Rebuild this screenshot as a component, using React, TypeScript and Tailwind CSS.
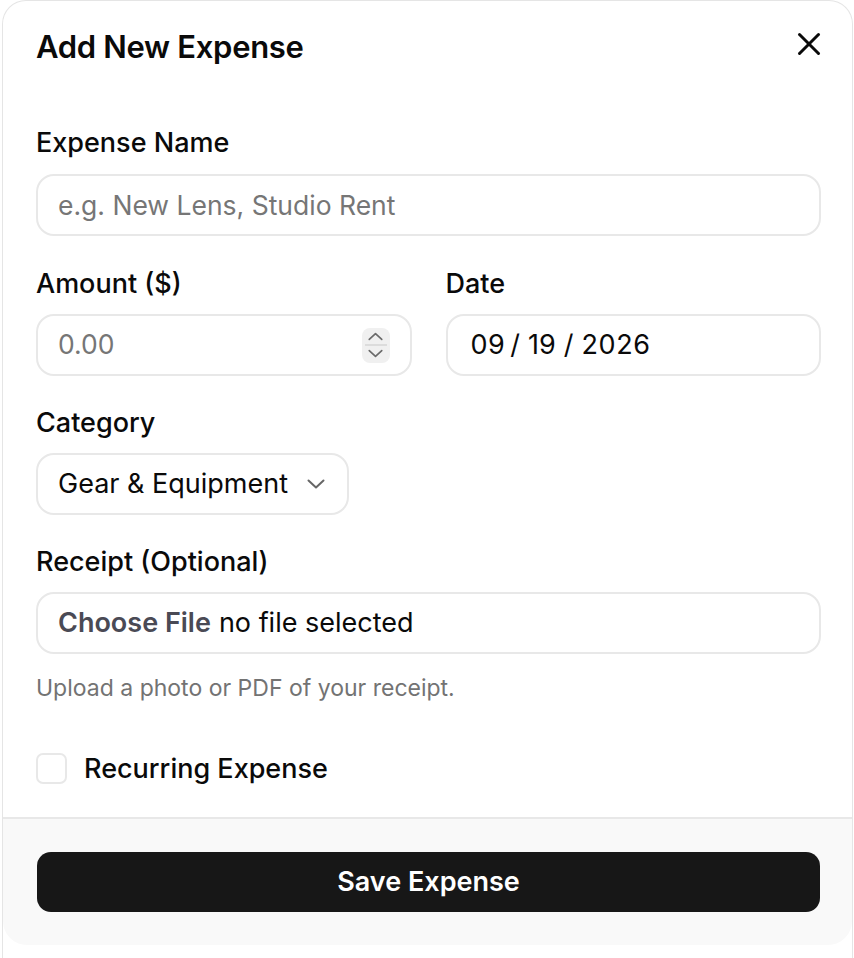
import { X } from "lucide-react"

function Chevron({ up = false, className = "" }: { up?: boolean; className?: string }) {
  return (
    <svg width="18" height="10" viewBox="0 0 18 10" className={className} fill="none">
      <path
        d={up ? "M1.5 8.5L9 1.5l7.5 7" : "M1.5 1.5L9 8.5l7.5-7"}
        stroke="currentColor"
        strokeWidth="2"
        strokeLinecap="round"
        strokeLinejoin="round"
      />
    </svg>
  )
}

export default function App() {
  return (
    <div className="h-[958px] bg-white font-['Inter',sans-serif] text-[#0a0a0a]">
      <div className="h-full ml-[2px] mr-[1px] flex flex-col border-x border-t border-[#e5e5e5] rounded-t-[24px]">
        {/* Header */}
        <div className="flex items-center justify-between pl-[33px] pr-[24px] pt-[24px]">
          <h1 className="text-[31px] leading-[38px] font-semibold tracking-[-0.01em]">Add New Expense</h1>
          <button aria-label="Close" className="mb-[6px]">
            <X className="h-[38px] w-[38px]" strokeWidth={1.9} />
          </button>
        </div>

        {/* Form */}
        <div className="flex-1 flex flex-col pl-[33px] pr-[31px] pt-[59px]">
          <div className="flex flex-col gap-[16px]">
            <label className="text-[27px] leading-[30px] font-medium">Expense Name</label>
            <input
              placeholder="e.g. New Lens, Studio Rent"
              className="h-[62px] w-full rounded-[18px] border-2 border-[#e8e8e8] px-[20px] text-[26.5px] placeholder:text-[#767676] outline-none"
            />
          </div>

          <div className="grid grid-cols-2 gap-[34px] mt-[33px]">
            <div className="flex flex-col gap-[15px]">
              <label className="text-[27px] leading-[30px] font-medium">Amount ($)</label>
              <div className="h-[62px] flex items-center rounded-[18px] border-2 border-[#e8e8e8] pl-[20px] pr-[20px]">
                <input
                  placeholder="0.00"
                  className="flex-1 min-w-0 text-[26.5px] placeholder:text-[#767676] outline-none"
                />
                <div className="flex flex-col items-center justify-center gap-[3px] w-[28px] h-[35px] rounded-[8px] bg-[#f0f0f0] text-[#6b6b6b]">
                  <Chevron up className="w-[15px] h-[9px]" />
                  <div className="w-[22px] h-[2px] bg-[#dcdcdc]" />
                  <Chevron className="w-[15px] h-[9px]" />
                </div>
              </div>
            </div>
            <div className="flex flex-col gap-[15px]">
              <label className="text-[27px] leading-[30px] font-medium">Date</label>
              <div className="h-[62px] flex items-center rounded-[18px] border-2 border-[#e8e8e8] px-[23px] text-[27px]">
                <span className="tracking-[0.02em]">09</span>
                <span className="ml-[5px]">/</span>
                <span className="ml-[8px]">19</span>
                <span className="ml-[8px]">/</span>
                <span className="ml-[8px] tracking-[0.02em]">2026</span>
              </div>
            </div>
          </div>

          <div className="flex flex-col gap-[15px] mt-[32px]">
            <label className="text-[27px] leading-[30px] font-medium">Category</label>
            <div className="h-[62px] w-[313px] flex items-center justify-between rounded-[18px] border-2 border-[#e8e8e8] pl-[20px] pr-[22px] text-[27px]">
              <span>Gear &amp; Equipment</span>
              <Chevron className="w-[18px] h-[10px] text-[#666666]" />
            </div>
          </div>

          <div className="flex flex-col gap-[15px] mt-[32px]">
            <label className="text-[27px] leading-[30px] font-medium">Receipt (Optional)</label>
            <div className="h-[62px] flex items-center gap-[8px] rounded-[18px] border-2 border-[#e8e8e8] px-[20px] text-[27px]">
              <span className="font-semibold text-[#4a4a55]">Choose File</span>
              <span>no file selected</span>
            </div>
            <p className="text-[23px] leading-[28px] text-[#737373] mt-[5px]">Upload a photo or PDF of your receipt.</p>
          </div>

          <div className="flex items-center gap-[17px] mt-[51px]">
            <div className="h-[31px] w-[31px] rounded-[7px] border-2 border-[#e8e8e8]" />
            <span className="text-[27px] leading-[30px] font-medium">Recurring Expense</span>
          </div>
        </div>

        {/* Footer */}
        <div className="h-[128px] mb-[13px] flex items-center pl-[34px] pr-[32px] bg-[#f9f9f9] border-t-2 border-[#e8e8e8] rounded-b-[24px]">
          <button className="h-[60px] w-full rounded-[14px] bg-[#171717] text-white text-[27px] font-semibold">
            Save Expense
          </button>
        </div>
      </div>
    </div>
  )
}
